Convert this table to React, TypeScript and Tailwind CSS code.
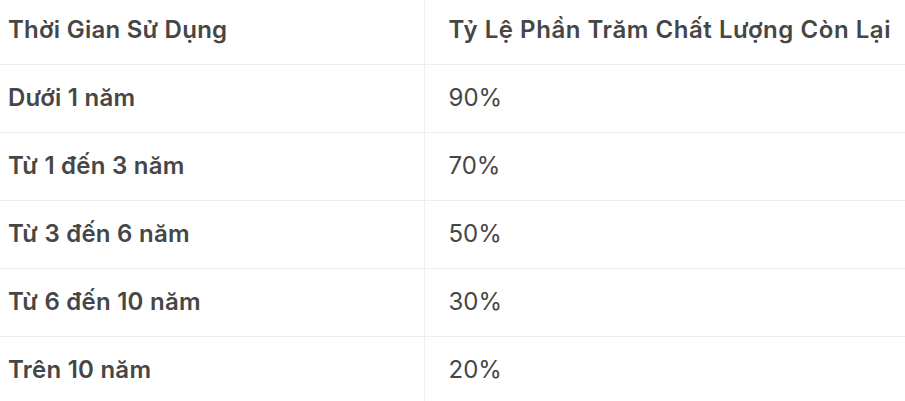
const rows: [string, string][] = [
  ['Dưới 1 năm', '90%'],
  ['Từ 1 đến 3 năm', '70%'],
  ['Từ 3 đến 6 năm', '50%'],
  ['Từ 6 đến 10 năm', '30%'],
  ['Trên 10 năm', '20%'],
];

export default function App() {
  return (
    <div className="w-[905px] h-[401px] overflow-hidden bg-white font-['Inter',sans-serif] text-[24px] text-[#464646]">
      <table className="-mt-[4px] border-collapse w-[905px] table-fixed">
        <colgroup>
          <col className="w-[424px]" />
          <col />
        </colgroup>
        <thead>
          <tr className="h-[68px] border-b border-[#eeeeee]">
            <th className="text-left font-semibold pl-2 tracking-[0.25px] border-r border-[#eeeeee]">Thời Gian Sử Dụng</th>
            <th className="text-left font-semibold pl-[24px] tracking-[0.55px] whitespace-nowrap">Tỷ Lệ Phần Trăm Chất Lượng Còn Lại</th>
          </tr>
        </thead>
        <tbody>
          {rows.map(([time, pct], i) => (
            <tr key={i} className="h-[68px] border-b border-[#eeeeee]">
              <td className="font-semibold pl-2 tracking-[0.25px] border-r border-[#eeeeee]">{time}</td>
              <td className="pl-[24px]">{pct}</td>
            </tr>
          ))}
        </tbody>
      </table>
    </div>
  );
}
